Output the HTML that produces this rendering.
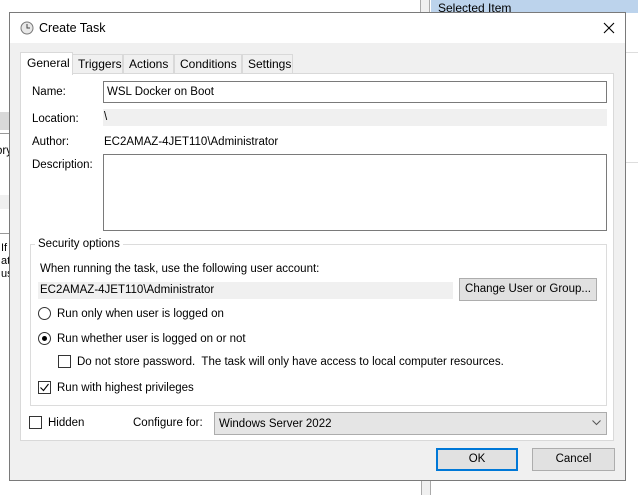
<!DOCTYPE html>
<html><head><meta charset="utf-8"><style>
*{box-sizing:border-box;margin:0;padding:0}
body{width:638px;height:495px;overflow:hidden;background:#fff;font-family:"Liberation Sans",sans-serif;font-size:11.5px;color:#000;position:relative}
.a{position:absolute}
.t{position:absolute;white-space:nowrap;line-height:14px}
.btn{position:absolute;background:#e1e1e1;border:1px solid #adadad;text-align:center;line-height:20px}
.cb{position:absolute;width:13px;height:13px;border:1px solid #333;background:#fff}
.rb{position:absolute;width:13px;height:13px;border:1px solid #333;border-radius:50%;background:#fff}
.tab{font-size:12px}
</style></head><body>
<div class="a" style="left:0;top:0;width:12px;height:495px;background:#fff"></div>
<div class="a" style="left:0;top:112px;width:10px;height:18px;background:#d9d9d9"></div>
<div class="a" style="left:0;top:133px;width:10px;height:1px;background:#999"></div>
<div class="t" style="left:-4px;top:144px">ory</div>
<div class="a" style="left:0;top:195px;width:10px;height:14px;background:#f0f0f0"></div>
<div class="a" style="left:0;top:233px;width:10px;height:1px;background:#999"></div>
<div class="t" style="left:1px;top:242px;font-size:11px;line-height:13px">If<br>at<br>us</div>
<div class="a" style="left:420px;top:0;width:10px;height:13px;background:#f0f0f0;border-left:1px solid #aaa;border-right:1px solid #aaa"></div>
<div class="a" style="left:431px;top:0;width:207px;height:13px;background:#bcd3ec"></div>
<div class="t" style="left:438px;top:1px;font-size:12px">Selected Item</div>
<div class="a" style="left:626px;top:13px;width:12px;height:482px;background:#fff"></div>
<div class="a" style="left:626px;top:52px;width:12px;height:1px;background:#ddd"></div>
<div class="a" style="left:626px;top:162px;width:12px;height:1px;background:#ddd"></div>
<div class="a" style="left:421px;top:480px;width:10px;height:15px;background:#f0f0f0;border-left:1px solid #aaa;border-right:1px solid #aaa"></div>
<div class="a" style="left:9px;top:12px;width:617px;height:469px;background:#f0f0f0;border:1px solid #7a7a7a"></div>
<div class="a" style="left:10px;top:13px;width:615px;height:30px;background:#fff"></div>
<svg class="a" style="left:20px;top:21px" width="14" height="14" viewBox="0 0 14 14"><circle cx="7" cy="7" r="6" fill="#e8e8e8" stroke="#777"/><path d="M7 3v4h3" stroke="#444" fill="none"/></svg>
<div class="t" style="left:39px;top:21px;font-size:12.5px">Create Task</div>
<svg class="a" style="left:603px;top:22px" width="12" height="12"><path d="M1 1L11 11M11 1L1 11" stroke="#000" stroke-width="1.1"/></svg>
<div class="a" style="left:20px;top:73px;width:594px;height:368px;background:#fff;border:1px solid #d9d9d9"></div>
<div class="a" style="left:72px;top:54px;width:51px;height:20px;background:#f0f0f0;border:1px solid #d9d9d9"></div>
<div class="a" style="left:123px;top:54px;width:51px;height:20px;background:#f0f0f0;border:1px solid #d9d9d9"></div>
<div class="a" style="left:174px;top:54px;width:68px;height:20px;background:#f0f0f0;border:1px solid #d9d9d9"></div>
<div class="a" style="left:242px;top:54px;width:51px;height:20px;background:#f0f0f0;border:1px solid #d9d9d9"></div>
<div class="a" style="left:20px;top:52px;width:53px;height:23px;background:#fff;border:1px solid #d9d9d9;border-bottom:none"></div>
<div class="t tab" style="left:27px;top:56px">General</div>
<div class="t tab" style="left:78px;top:57px">Triggers</div>
<div class="t tab" style="left:129px;top:57px">Actions</div>
<div class="t tab" style="left:180px;top:57px">Conditions</div>
<div class="t tab" style="left:248px;top:57px">Settings</div>
<div class="t" style="left:32px;top:85px">Name:</div>
<div class="a" style="left:103px;top:81px;width:504px;height:22px;border:1px solid #7a7a7a;background:#fff"></div>
<div class="t" style="left:107px;top:85px">WSL Docker on Boot</div>
<div class="t" style="left:32px;top:112px">Location:</div>
<div class="a" style="left:103px;top:109px;width:504px;height:17px;background:#f0f0f0"></div>
<div class="t" style="left:104px;top:110px">\</div>
<div class="t" style="left:32px;top:135px">Author:</div>
<div class="t" style="left:104px;top:135px">EC2AMAZ-4JET110\Administrator</div>
<div class="t" style="left:32px;top:158px">Description:</div>
<div class="a" style="left:103px;top:154px;width:504px;height:77px;border:1px solid #7a7a7a;background:#fff"></div>
<div class="a" style="left:30px;top:244px;width:577px;height:162px;border:1px solid #dcdcdc"></div>
<div class="t" style="left:35px;top:237px;background:#fff;padding:0 3px">Security options</div>
<div class="t" style="left:40px;top:262px">When running the task, use the following user account:</div>
<div class="a" style="left:38px;top:282px;width:415px;height:17px;background:#f0f0f0"></div>
<div class="t" style="left:40px;top:283px">EC2AMAZ-4JET110\Administrator</div>
<div class="btn" style="left:459px;top:278px;width:138px;height:23px">Change User or Group...</div>
<div class="rb" style="left:38px;top:307px"></div>
<div class="t" style="left:57px;top:307px">Run only when user is logged on</div>
<div class="rb" style="left:38px;top:332px"></div>
<div class="a" style="left:42px;top:336px;width:5px;height:5px;border-radius:50%;background:#000"></div>
<div class="t" style="left:57px;top:332px">Run whether user is logged on or not</div>
<div class="cb" style="left:58px;top:355px"></div>
<div class="t" style="left:77px;top:355px">Do not store password.&nbsp; The task will only have access to local computer resources.</div>
<div class="cb" style="left:38px;top:381px"></div>
<svg class="a" style="left:39px;top:382px" width="11" height="11"><path d="M1.5 5.5L4.5 8.5L9.5 2" stroke="#000" fill="none" stroke-width="1.1"/></svg>
<div class="t" style="left:57px;top:381px">Run with highest privileges</div>
<div class="cb" style="left:29px;top:416px"></div>
<div class="t" style="left:48px;top:416px">Hidden</div>
<div class="t" style="left:133px;top:416px">Configure for:</div>
<div class="a" style="left:214px;top:412px;width:393px;height:23px;background:#e5e5e5;border:1px solid #acacac"></div>
<div class="t" style="left:219px;top:417px">Windows Server 2022</div>
<svg class="a" style="left:592px;top:420px" width="9" height="6"><path d="M0.5 0.5L4.5 4.5L8.5 0.5" stroke="#555" fill="none"/></svg>
<div class="btn" style="left:436px;top:448px;width:82px;height:23px;border:2px solid #0078d7;line-height:19px">OK</div>
<div class="btn" style="left:532px;top:448px;width:83px;height:23px">Cancel</div>
</body></html>
